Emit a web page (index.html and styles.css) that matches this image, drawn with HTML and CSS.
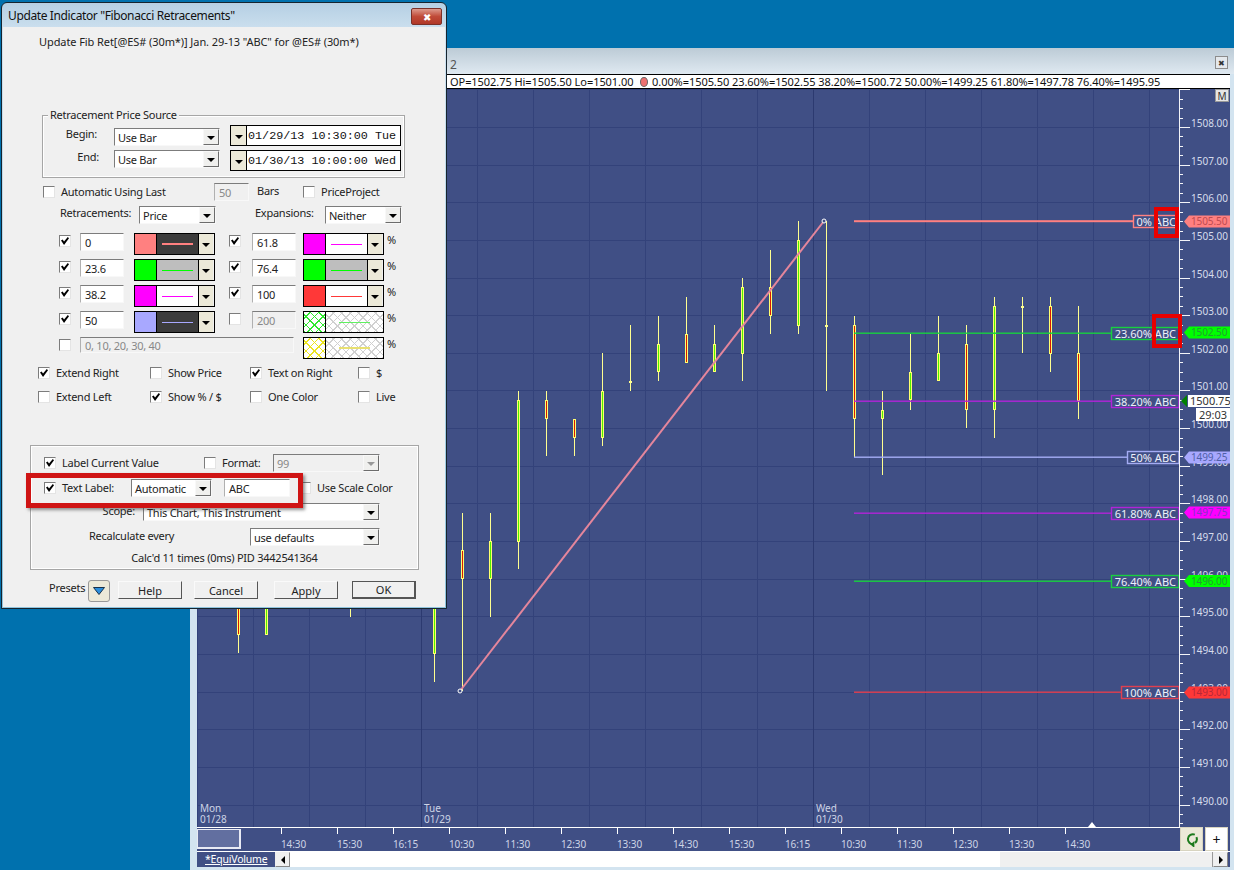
FILE: index.html
```html
<!DOCTYPE html>
<html lang="en">
<head>
  <meta charset="UTF-8" />
  <title>Update Indicator - Fibonacci Retracements</title>
  <link rel="stylesheet" href="styles.css">
</head>
<body>

  <!-- chart window, behind the dialog -->
  <div class="chart-window">
    <div class="chart-title">
      <span class="chart-name">2</span>
      <button class="win-close">&#10006;</button>
    </div>
    <div class="chart-body">
      <div class="data-strip">OP=1502.75 Hi=1505.50 Lo=1501.00 <i class="dot"></i> 0.00%=1505.50 23.60%=1502.55 38.20%=1500.72 50.00%=1499.25 61.80%=1497.78 76.40%=1495.95</div>
      <div class="plot">
        <svg id="chart" class="chart-svg" viewBox="197 89 1033 738" width="1033" height="738"></svg>
        <button class="m-btn">M</button>
      </div>
      <div class="axis-row">
        <div class="time-axis">
          <div class="overview"></div>
          <span>14:30</span><span>15:30</span><span>16:15</span><span>10:30</span><span>11:30</span>
          <span>12:30</span><span>13:30</span><span>14:30</span><span>15:30</span><span>16:15</span>
          <span>10:30</span><span>11:30</span><span>12:30</span><span>13:30</span><span>14:30</span>
        </div>
        <button class="axis-btn refresh">
          <svg width="15" height="15" viewBox="0 0 15 15">
            <path d="M10.8 2.6A5 5 0 1 0 9.6 12.2" fill="none" stroke="#1c7a1c" stroke-width="2"/>
            <path d="M12.4 5.2A5 5 0 0 1 11 11" fill="none" stroke="#1c7a1c" stroke-width="2"/>
            <path d="M6.4 12.4l4-3.4v7z" fill="#1c7a1c"/>
          </svg>
        </button>
        <button class="axis-btn plus">+</button>
      </div>
      <div class="tab-row">
        <a class="tab" href="#">*EquiVolume</a>
        <button class="scroll-btn"><i class="tri-left"></i></button>
        <div class="scroll-track"><div class="scroll-thumb"></div></div>
        <button class="scroll-btn"><i class="tri-right"></i></button>
      </div>
    </div>
  </div>

  <!-- indicator dialog -->
  <div class="dialog">
    <div class="dialog-title">
      <span>Update Indicator "Fibonacci Retracements"</span>
      <button class="dialog-close">&#10006;</button>
    </div>
    <div class="dialog-body">
      <div class="caption">Update Fib Ret[@ES# (30m*)] Jan. 29-13 "ABC" for @ES# (30m*)</div>

      <div class="group source-group">
        <span class="legend">Retracement Price Source</span>
        <div class="source-row">
          <span class="source-label">Begin:</span>
          <div class="select first-select"><span>Use Bar</span><i class="arrow"></i></div>
          <div class="date"><i class="date-btn"></i><span>01/29/13 10:30:00 Tue</span></div>
        </div>
        <div class="source-row">
          <span class="source-label end-label">End:</span>
          <div class="select"><span>Use Bar</span><i class="arrow"></i></div>
          <div class="date"><i class="date-btn"></i><span>01/30/13 10:00:00 Wed</span></div>
        </div>
      </div>

      <div class="auto-row">
        <label class="opt"><input type="checkbox" class="chk">Automatic Using Last</label>
        <div class="field off">50</div>
        <span class="bars-label">Bars</span>
        <label class="opt"><input type="checkbox" class="chk">PriceProject</label>
      </div>

      <div class="mode-row">
        <span class="mode-label">Retracements:</span>
        <div class="select"><span>Price</span><i class="arrow"></i></div>
        <span class="mode-label">Expansions:</span>
        <div class="select"><span>Neither</span><i class="arrow"></i></div>
      </div>

      <div class="levels">
        <div class="level-row">
          <input type="checkbox" class="chk" checked>
          <div class="field">0</div>
          <div class="swatch"><i class="color salmon"></i><i class="line on-dark"><b class="salmon thick"></b></i><i class="arrow"></i></div>
          <input type="checkbox" class="chk" checked>
          <div class="field">61.8</div>
          <div class="swatch"><i class="color magenta"></i><i class="line"><b class="magenta"></b></i><i class="arrow"></i></div>
          <span class="pct">%</span>
        </div>
        <div class="level-row">
          <input type="checkbox" class="chk" checked>
          <div class="field">23.6</div>
          <div class="swatch"><i class="color lime"></i><i class="line on-grey"><b class="lime"></b></i><i class="arrow"></i></div>
          <input type="checkbox" class="chk" checked>
          <div class="field">76.4</div>
          <div class="swatch"><i class="color lime"></i><i class="line on-grey"><b class="lime"></b></i><i class="arrow"></i></div>
          <span class="pct">%</span>
        </div>
        <div class="level-row">
          <input type="checkbox" class="chk" checked>
          <div class="field">38.2</div>
          <div class="swatch"><i class="color magenta"></i><i class="line"><b class="magenta"></b></i><i class="arrow"></i></div>
          <input type="checkbox" class="chk" checked>
          <div class="field">100</div>
          <div class="swatch"><i class="color red"></i><i class="line"><b class="red"></b></i><i class="arrow"></i></div>
          <span class="pct">%</span>
        </div>
        <div class="level-row">
          <input type="checkbox" class="chk" checked>
          <div class="field">50</div>
          <div class="swatch"><i class="color periwinkle"></i><i class="line on-dark"><b class="periwinkle"></b></i><i class="arrow"></i></div>
          <input type="checkbox" class="chk">
          <div class="field off">200</div>
          <div class="swatch"><i class="color hatch-green"></i><i class="line hatch-grey wide"><b class="lime-soft"></b></i></div>
          <span class="pct">%</span>
        </div>
        <div class="level-row last-level">
          <input type="checkbox" class="chk">
          <div class="field off long-field">0, 10, 20, 30, 40</div>
          <div class="swatch"><i class="color hatch-yellow"></i><i class="line hatch-grey wide"><b class="yellow-soft thick"></b></i></div>
          <span class="pct">%</span>
        </div>
      </div>

      <div class="options">
        <label class="opt"><input type="checkbox" class="chk" checked>Extend Right</label>
        <label class="opt"><input type="checkbox" class="chk">Show Price</label>
        <label class="opt"><input type="checkbox" class="chk" checked>Text on Right</label>
        <label class="opt"><input type="checkbox" class="chk">$</label>
        <label class="opt"><input type="checkbox" class="chk">Extend Left</label>
        <label class="opt"><input type="checkbox" class="chk" checked>Show % / $</label>
        <label class="opt"><input type="checkbox" class="chk">One Color</label>
        <label class="opt"><input type="checkbox" class="chk">Live</label>
      </div>

      <div class="group label-group">
        <div class="label-row row-format">
          <label class="opt"><input type="checkbox" class="chk" checked>Label Current Value</label>
          <label class="opt"><input type="checkbox" class="chk">Format:</label>
          <div class="select disabled"><span>99</span><i class="arrow"></i></div>
        </div>
        <div class="label-row row-text">
          <label class="opt"><input type="checkbox" class="chk" checked>Text Label:</label>
          <div class="select"><span>Automatic</span><i class="arrow"></i></div>
          <div class="field">ABC</div>
          <label class="opt"><input type="checkbox" class="chk">Use Scale Color</label>
        </div>
        <div class="label-row row-scope">
          <span class="scope-label">Scope:</span>
          <div class="select"><span>This Chart, This Instrument</span><i class="arrow"></i></div>
        </div>
        <div class="label-row row-recalc">
          <span class="recalc-label">Recalculate every</span>
          <div class="select"><span>use defaults</span><i class="arrow"></i></div>
        </div>
        <div class="calc-line">Calc'd 11 times (0ms) PID 3442541364</div>
        <div class="callout"></div>
      </div>

      <div class="button-row">
        <span class="presets-label">Presets</span>
        <button class="presets-btn">
          <svg width="12" height="8" viewBox="0 0 12 8"><path d="M.5.5h11L6 7.5z" fill="#2b8edc" stroke="#17324c"/></svg>
        </button>
        <button class="btn">Help</button>
        <button class="btn">Cancel</button>
        <button class="btn">Apply</button>
        <button class="btn default-btn">OK</button>
      </div>
    </div>
  </div>

  <script src="chart.js"></script>
</body>
</html>
```

FILE: styles.css
```css
* {
  box-sizing: border-box;
}
html, body {
  margin: 0;
  height: 100%;
  overflow: hidden;
}
body {
  position: relative;
  width: 1234px;
  height: 870px;
  background: #0071ae;
  font-family: "Noto Sans", Arial, sans-serif;
  font-size: 11px;
  color: #222;
}
button {
  font: inherit;
  padding: 0;
}
i {
  font-style: normal;
}

/* chart window */
.chart-window {
  position: absolute;
  left: 190px;
  top: 48px;
  width: 1044px;
  height: 822px;
  background: #d3e4f0;
}
.chart-title {
  display: flex;
  align-items: center;
  justify-content: space-between;
  height: 26px;
  padding: 0 6px 0 260px;
  background: linear-gradient(#bccbd6, #dfe9f1);
}
.chart-name {
  font-size: 12px;
  color: #555;
  margin-top: 6px;
}
.win-close {
  width: 13px;
  height: 13px;
  margin-top: 3px;
  border: 1px solid #8c8c8c;
  background: #e4e8ec;
  font-size: 8px;
  line-height: 10px;
  color: #333;
}
.chart-body {
  margin: 0 4px 0 7px;
}
.data-strip {
  height: 15px;
  padding-left: 253px;
  border-top: 1px solid #000;
  border-bottom: 1px solid #000;
  background: #fff;
  font-size: 11px;
  line-height: 13px;
  letter-spacing: -0.06px;
  white-space: nowrap;
  overflow: hidden;
  color: #111;
}
.dot {
  display: inline-block;
  width: 8px;
  height: 10px;
  margin: 0 1px 0 4px;
  vertical-align: -1px;
  border-radius: 50%;
  background: #ee7070;
  border: 1px solid #666;
}
.plot {
  position: relative;
  height: 738px;
}
.chart-svg {
  display: block;
  background: #404f85;
}
.m-btn {
  position: absolute;
  right: 1px;
  top: 0;
  width: 14px;
  height: 13px;
  border: 1px solid #999;
  background: #e6e6e6;
  font-size: 10px;
  line-height: 10px;
  color: #333;
}
.axis-row {
  display: flex;
  height: 24px;
  background: #404f85;
}
.time-axis {
  display: flex;
  width: 984px;
  border-top: 1px solid #fff;
  color: #ced4e6;
  font-size: 10px;
  letter-spacing: -0.1px;
}
.time-axis span {
  width: 56px;
  line-height: 11px;
}
.time-axis span::before {
  content: "";
  display: block;
  width: 1px;
  height: 6px;
  margin-bottom: 5px;
  background: #fff;
}
.overview {
  width: 44px;
  height: 20px;
  margin: 1px 40px 0 0;
  background: #626fa0;
  border: 1px solid #e8eaf4;
  border-width: 1px 2px 2px 1px;
}
.axis-btn {
  width: 23px;
  height: 24px;
  margin-right: 2px;
  border: 1px solid #d8d4c0;
  background: #ece9d8;
  display: flex;
  align-items: center;
  justify-content: center;
}
.plus {
  background: #fff;
  font-size: 14px;
  color: #111;
}
.tab-row {
  display: flex;
  height: 16px;
  border-top: 1px solid #fff;
  background: #404f85;
}
.tab {
  width: 78px;
  padding-left: 8px;
  color: #fff;
  font-size: 10.5px;
  letter-spacing: -0.2px;
  line-height: 14px;
}
.scroll-btn {
  width: 15px;
  height: 15px;
  border: 1px solid #888;
  border-top-color: #eee;
  border-left-color: #eee;
  background: #f0f0f0;
  display: flex;
  align-items: center;
  justify-content: center;
}
.tri-left, .tri-right {
  width: 0;
  height: 0;
  border-top: 4px solid transparent;
  border-bottom: 4px solid transparent;
}
.tri-left {
  border-right: 4px solid #000;
}
.tri-right {
  border-left: 4px solid #000;
}
.scroll-track {
  width: 923px;
  height: 15px;
  padding-left: 710px;
  background: #fff;
}
.scroll-thumb {
  height: 15px;
  background: #f0f0f0;
  border-right: 1px solid #999;
}

/* chart svg text */
.scale-text {
  font-size: 10px;
  fill: #d6dcec;
}
.date-text {
  font-size: 10px;
  fill: #ced4e6;
}
.fib-text {
  font-size: 11px;
  fill: #eef0fa;
}
.tag-text {
  font-size: 10px;
  letter-spacing: -0.1px;
}
.now-text {
  font-size: 11px;
  fill: #333;
}

/* dialog */
.dialog {
  position: absolute;
  left: 1px;
  top: 2px;
  width: 446px;
  height: 607px;
  padding: 0 1px 1px;
  border: 1px solid #16242e;
  border-radius: 6px 6px 0 0;
  background: linear-gradient(#b5cfe3, #cfe2f0 30px, #8fc4de);
}
.dialog-title {
  display: flex;
  align-items: center;
  justify-content: space-between;
  height: 24px;
  padding: 0 3px 0 5px;
  font-size: 12px;
  letter-spacing: -0.38px;
  color: #111;
}
.dialog-close {
  width: 31px;
  height: 17px;
  margin-top: 3px;
  border: 1px solid #7a3028;
  border-radius: 2px;
  background: linear-gradient(#dd9a8c, #c04a38 50%, #b03828);
  font-size: 10px;
  line-height: 14px;
  color: #fff;
}
.dialog-body {
  position: relative;
  width: 442px;
  height: 580px;
  background: #f0f0f0;
  letter-spacing: -0.25px;
}
.caption {
  height: 16px;
  margin: 0 0 65px;
  padding: 7px 0 0 36px;
  line-height: 16px;
  letter-spacing: -0.08px;
  box-sizing: content-box;
}
.group {
  position: relative;
  border: 1px solid #a6a6a6;
  box-shadow: 0 0 0 1px #fff inset;
}
.legend {
  position: absolute;
  left: 5px;
  top: -8px;
  padding: 0 2px;
  background: #f0f0f0;
  line-height: 14px;
}

.source-group {
  width: 363px;
  height: 63px;
  margin-left: 39px;
  padding-top: 9px;
}
.source-row {
  display: grid;
  grid-template-columns: 54px 106px 171px;
  height: 21px;
  margin-bottom: 4px;
  align-items: start;
}
.source-row .select {
  width: 106px;
  margin-left: 17px;
}
.source-row .date {
  margin-left: 27px;
}
.source-label {
  text-align: right;
  line-height: 14px;
  padding-top: 2px;
}
.end-label {
  margin-right: -2px;
  padding-top: 0;
}
.first-select {
  margin-top: 3px;
}
.date {
  display: flex;
  width: 171px;
  height: 21px;
  border: 1px solid #000;
  background: #fff;
  font-family: "Liberation Mono", monospace;
  font-size: 11.75px;
  letter-spacing: 0;
  line-height: 21px;
  white-space: nowrap;
  color: #111;
}
.date span {
  margin-left: 1px;
}
.date-btn {
  position: relative;
  flex: none;
  width: 16px;
  border-right: 1px solid #000;
  background: #ece9d8;
}
.date-btn::after, .arrow::after {
  content: "";
  position: absolute;
  left: 50%;
  top: 50%;
  margin: -1px 0 0 -4px;
  border-left: 4px solid transparent;
  border-right: 4px solid transparent;
  border-top: 4px solid #000;
}

.select {
  display: flex;
  justify-content: space-between;
  height: 18px;
  padding-left: 3px;
  border: 1px solid;
  border-color: #7c7c7c #f8f8f8 #f8f8f8 #7c7c7c;
  background: #fff;
  line-height: 17px;
  white-space: nowrap;
}
.arrow {
  position: relative;
  flex: none;
  width: 16px;
  border: 1px solid;
  border-color: #f8f8f8 #6c6c6c #6c6c6c #f8f8f8;
  background: #f0f0ee;
}
.select.disabled {
  background: #f0f0f0;
  color: #888;
}
.select.disabled .arrow::after {
  border-top-color: #999;
}

.field {
  height: 18px;
  padding-left: 4px;
  border: 1px solid;
  border-color: #7c7c7c #f8f8f8 #f8f8f8 #b0b0b0;
  background: #fff;
  line-height: 17px;
  white-space: nowrap;
}
.field.off {
  background: #f0f0f0;
  color: #888;
}

.chk {
  appearance: none;
  position: relative;
  flex: none;
  width: 12px;
  height: 12px;
  margin: 2px 0 0;
  border: 1px solid;
  border-color: #7c7c7c #e4e4e4 #e4e4e4 #7c7c7c;
  background: #fff;
}
.chk:checked::after {
  content: "";
  position: absolute;
  left: 1px;
  top: 1px;
  width: 8px;
  height: 8px;
  background: #000;
  clip-path: polygon(0 45%, 20% 30%, 38% 55%, 85% 0, 100% 15%, 38% 100%);
}
.opt {
  display: flex;
  align-items: center;
  gap: 6px;
  padding-bottom: 2px;
  white-space: nowrap;
}

.auto-row {
  display: grid;
  grid-template-columns: 171px 43px 46px 1fr;
  align-items: center;
  height: 18px;
  margin: 5px 0 5px 40px;
}
.auto-row .field {
  width: 35px;
}
.bars-label {
  margin-top: -3px;
}
.mode-row {
  display: grid;
  grid-template-columns: 79px 116px 70px 77px;
  align-items: center;
  height: 18px;
  margin-left: 57px;
}
.mode-row .select {
  width: 77px;
}
.mode-label {
  margin-top: -6px;
}

.levels {
  margin: 9px 0 0 56px;
}
.level-row {
  display: grid;
  grid-template-columns: 21px 54px 95px 23px 51px 84px 15px;
  align-items: start;
  height: 26px;
}
.level-row .chk {
  margin-top: 2px;
}
.level-row .field {
  width: 44px;
}
.last-level {
  grid-template-columns: 21px 223px 84px 15px;
}
.level-row .long-field {
  width: 214px;
  height: 16px;
  line-height: 15px;
}
.swatch {
  display: flex;
  width: 81px;
  height: 22px;
  border: 1px solid #000;
}
.swatch .arrow {
  width: 15px;
  border: 0;
  border-left: 1px solid #000;
  background: #ece9d8;
}
.color {
  width: 22px;
  border-right: 1px solid #000;
}
.line {
  display: flex;
  align-items: center;
  justify-content: center;
  width: 41px;
  background: #fff;
}
.line b {
  display: block;
  width: 31px;
  height: 1px;
}
.line b.thick {
  height: 2px;
}
.line.wide {
  flex: 1;
}
.on-dark {
  background: #3c3c3c;
}
.on-grey {
  background: #bebebe;
}
.salmon { background: #ff8080; }
.magenta { background: #ff00ff; }
.lime { background: #00ff00; }
.red { background: #ff3838; }
.periwinkle { background: #a8a8ff; }
.lime-soft { background: #60f060; }
.yellow-soft { background: #e8e070; }
.hatch-green {
  background:
    repeating-linear-gradient(45deg, #30e830 0 1px, transparent 1px 6px),
    repeating-linear-gradient(-45deg, #30e830 0 1px, transparent 1px 6px),
    #fff;
}
.hatch-yellow {
  background:
    repeating-linear-gradient(45deg, #ece420 0 1px, transparent 1px 6px),
    repeating-linear-gradient(-45deg, #ece420 0 1px, transparent 1px 6px),
    #fff;
}
.hatch-grey {
  background:
    repeating-linear-gradient(45deg, #d0d0d0 0 1px, transparent 1px 6px),
    repeating-linear-gradient(-45deg, #d0d0d0 0 1px, transparent 1px 6px),
    #fff;
}
.pct {
  line-height: 14px;
}

.options {
  display: grid;
  grid-template-columns: 112px 100px 108px 1fr;
  grid-auto-rows: 24px;
  margin: -2px 0 0 35px;
}

.label-group {
  width: 389px;
  height: 125px;
  margin: 36px 0 0 27px;
  padding: 8px 0 0 13px;
  background: #f0f0f0;
}
.label-row {
  display: grid;
  align-items: center;
  height: 18px;
}
.row-format {
  grid-template-columns: 160px 69px 107px;
}
.row-text {
  grid-template-columns: 87px 81px 78px 1fr;
  margin-top: 7px;
}
.row-text .select {
  width: 81px;
}
.row-text .field {
  width: 66px;
  margin-left: 12px;
}
.row-text .opt:last-child {
  margin-left: 9px;
}
.row-scope {
  grid-template-columns: 91px 237px;
  column-gap: 8px;
  margin-top: 6px;
}
.scope-label {
  text-align: right;
  margin-top: -3px;
}
.row-recalc {
  grid-template-columns: 206px 130px;
  margin-top: 7px;
}
.recalc-label {
  padding-left: 45px;
  margin-top: -3px;
}
.calc-line {
  margin: 4px 0 0 -13px;
  text-align: center;
  line-height: 16px;
}
.callout {
  position: absolute;
  left: -5px;
  top: 27px;
  width: 277px;
  height: 35px;
  border: 5px solid #cf1414;
  box-shadow: 2px 2px 3px rgba(60, 60, 60, 0.55);
}

.button-row {
  display: grid;
  grid-template-columns: 39px 30px 76px 80px 78px 64px;
  align-items: start;
  height: 22px;
  margin: 10px 0 0 46px;
}
.presets-label {
  line-height: 16px;
}
.presets-btn {
  display: flex;
  align-items: center;
  justify-content: center;
  width: 22px;
  height: 22px;
  border: 1px solid #999;
  border-radius: 3px;
  background: #ece9d8;
}
.btn {
  width: 64px;
  height: 18px;
  margin-top: 1px;
  border: 1px solid;
  border-color: #fafafa #555 #555 #fafafa;
  background: #f0f0f0;
  line-height: 15px;
  color: #222;
}
.default-btn {
  border: 1px solid #555;
  border-bottom-width: 2px;
  border-right-width: 2px;
}
```

FILE: chart.js
```js
// y position of a price, x positions come straight from the 28px bar spacing
const priceY = p => 127 + (1508 - p) * 37.64;

// [x, high y, body top, body bottom, low y, up?]  body top === 0 means doji, dot is at bottom value
const bars = [
  [238, 560, 560, 634, 653, false],
  [266, 560, 560, 634, 634, true],
  [350, 560, 0, 600, 617, true],
  [434, 560, 560, 653, 682, true],
  [462, 513, 550, 578, 691, false],
  [490, 513, 541, 578, 617, true],
  [518, 391, 400, 541, 569, true],
  [546, 391, 400, 418, 456, false],
  [574, 419, 419, 437, 456, false],
  [602, 353, 391, 437, 446, true],
  [630, 325, 0, 382, 391, true],
  [658, 316, 344, 371, 381, true],
  [686, 297, 334, 362, 362, false],
  [714, 325, 344, 371, 371, true],
  [742, 278, 287, 353, 381, true],
  [770, 250, 287, 315, 334, false],
  [798, 221, 240, 325, 334, true],
  [826, 221, 0, 326, 391, true],
  [854, 316, 325, 418, 457, false],
  [882, 391, 410, 418, 475, true],
  [910, 334, 372, 399, 410, true],
  [938, 316, 353, 380, 380, true],
  [966, 325, 344, 409, 428, false],
  [994, 297, 306, 409, 438, true],
  [1022, 297, 0, 307, 353, true],
  [1050, 297, 306, 353, 372, false],
  [1078, 306, 353, 400, 419, false]
];

const fibs = [
  { y: 221, boxX: 1133, text: "0% ABC", color: "#ff8080", width: 2 },
  { y: 333, boxX: 1111, text: "23.60% ABC", color: "#18d040", width: 1.4 },
  { y: 401, boxX: 1111, text: "38.20% ABC", color: "#b024d8", width: 1.4 },
  { y: 457, boxX: 1127, text: "50% ABC", color: "#a4acf4", width: 1.4 },
  { y: 513, boxX: 1111, text: "61.80% ABC", color: "#b024d8", width: 1.4 },
  { y: 581, boxX: 1111, text: "76.40% ABC", color: "#18d040", width: 1.4 },
  { y: 692, boxX: 1121, text: "100% ABC", color: "#e04050", width: 1.4 }
];

const tags = [
  { y: 221.5, text: "1505.50", fill: "#ff8080", ink: "#c04c50" },
  { y: 332.5, text: "1502.50", fill: "#00ff00", ink: "#20a030" },
  { y: 457.5, text: "1499.25", fill: "#a8a8ff", ink: "#5060a8" },
  { y: 512.5, text: "1497.75", fill: "#ff00ff", ink: "#8830c8" },
  { y: 581, text: "1496.00", fill: "#00ff00", ink: "#20a030" },
  { y: 692.5, text: "1493.00", fill: "#ff3838", ink: "#b82838" }
];

const svg = document.getElementById("chart");

function add(name, attrs, text) {
  const el = document.createElementNS("http://www.w3.org/2000/svg", name);
  for (const key in attrs) el.setAttribute(key, attrs[key]);
  if (text) el.textContent = text;
  svg.appendChild(el);
  return el;
}

function rect(x, y, w, h, fill) {
  add("rect", { x, y, width: w, height: h, fill, "shape-rendering": "crispEdges" });
}

// grid
for (let p = 1490; p <= 1509; p++) {
  rect(197, Math.round(priceY(p)), 983, 1, "#33427a");
}
for (let x = 197; x < 1180; x += 56) {
  const strong = x === 421 || x === 813;
  rect(x, 89, 1, 738, strong ? "#2c3a70" : "#33427a");
}

// date labels
[[200, "Mon", "01/28"], [424, "Tue", "01/29"], [816, "Wed", "01/30"]].forEach(d => {
  add("text", { x: d[0], y: 812, class: "date-text" }, d[1]);
  add("text", { x: d[0], y: 823, class: "date-text" }, d[2]);
});

// bars
bars.forEach(b => {
  const [x, high, top, bottom, low, up] = b;
  rect(x, high, 1, low - high, "#ffff90");
  if (top === 0) {
    rect(x - 1, bottom - 1, 3, 2, "#ffff90");
  } else {
    rect(x - 1, top, 3, bottom - top + 1, "#ffff70");
    rect(x, top + 1, 1, bottom - top - 1, up ? "#50f000" : "#d81800");
  }
});

// trend line
add("line", { x1: 460, y1: 691, x2: 824, y2: 221, stroke: "#e4869c", "stroke-width": 2 });
[[460, 691], [824, 221]].forEach(p => {
  add("circle", { cx: p[0], cy: p[1], r: 2, fill: "#404f85", stroke: "#fff" });
});

// retracement lines and their labels
fibs.forEach(f => {
  add("rect", { x: 854, y: f.y - f.width / 2 + 0.2, width: f.boxX - 854, height: f.width, fill: f.color });
  add("rect", { x: f.boxX + 0.5, y: f.y - 5.5, width: 1179 - f.boxX - 0.5, height: 12, fill: "#404f85", stroke: f.color, "stroke-width": 1.4 });
  add("text", { x: 1176, y: f.y + 4.5, class: "fib-text", "text-anchor": "end" }, f.text);
});

// price scale
rect(1179, 89, 1, 738, "#f4f4f8");
for (let p = 1489.5; p <= 1509.5; p += 0.25) {
  const y = Math.round(priceY(p));
  if (Number.isInteger(p)) {
    rect(1180, y, 10, 1, "#f4f4f8");
    if (p < 1509) add("text", { x: 1191, y: y, class: "scale-text" }, p.toFixed(2));
  } else {
    rect(1180, y, 3, 1, "#f4f4f8");
  }
}

// price tags
tags.forEach(t => {
  const y = t.y;
  add("polygon", { points: `1184,${y} 1189,${y - 6} 1230,${y - 6} 1230,${y + 6} 1189,${y + 6}`, fill: t.fill });
  add("text", { x: 1191, y: y + 3.5, class: "tag-text", fill: t.ink }, t.text);
});

// current price box and countdown
add("polygon", { points: "1181,401 1187,395 1187,407", fill: "#008000" });
rect(1188, 395, 42, 12, "#fff");
add("text", { x: 1190, y: 405, class: "now-text" }, "1500.75");
rect(1196, 408, 34, 13, "#fff");
add("text", { x: 1199, y: 419, class: "now-text" }, "29:03");

// small marker on the time axis
add("polygon", { points: "1092,822 1096,827 1088,827", fill: "#fff" });

// red highlights around the ABC text
add("rect", { x: 1156, y: 209, width: 21, height: 27, fill: "none", stroke: "#e80000", "stroke-width": 4 });
add("rect", { x: 1154, y: 316, width: 26, height: 30, fill: "none", stroke: "#e80000", "stroke-width": 4 });
```
